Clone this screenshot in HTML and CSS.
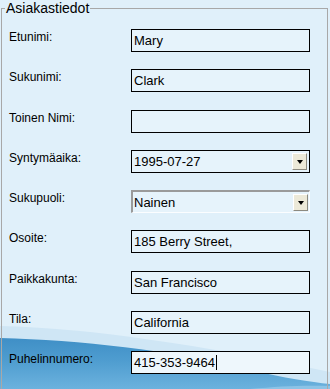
FILE: index.html
```html
<!DOCTYPE html>
<html lang="fi">
<head>
    <meta charset="UTF-8">
    <meta name="viewport" content="width=device-width, initial-scale=1.0">
    <title>Asiakastiedot</title>
    <link rel="stylesheet" href="styles.css">
</head>
<body>
    <!-- Wave decoration at the bottom of the window -->
    <svg class="wave" width="330" height="389" viewBox="0 0 330 389">
        <defs>
            <linearGradient id="band" x1="0" y1="0" x2="0" y2="1">
                <stop offset="0" stop-color="#3f8fc6"/>
                <stop offset="0.45" stop-color="#4f9dd0"/>
                <stop offset="1" stop-color="#6cb2de"/>
            </linearGradient>
        </defs>
        <path d="M0 326 C 90 328, 200 345, 330 372 L330 389 L0 389 Z" fill="#cfe6f5"/>
        <path d="M0 338 C 80 340, 170 350, 250 370 C 285 378, 310 382, 330 384 L330 389 L0 389 Z" fill="url(#band)"/>
        <path d="M250 389 C 280 386, 305 385, 330 386 L330 389 Z" fill="#8cc3e6"/>
    </svg>

    <fieldset class="customer">
        <legend>Asiakastiedot</legend>

        <div class="row">
            <label>Etunimi:</label>
            <div class="field">Mary</div>
        </div>
        <div class="row">
            <label>Sukunimi:</label>
            <div class="field">Clark</div>
        </div>
        <div class="row">
            <label>Toinen Nimi:</label>
            <div class="field"></div>
        </div>
        <div class="row">
            <label>Syntymäaika:</label>
            <div class="field combo">
                <span class="combo-text">1995-07-27</span>
                <span class="drop-btn"><span class="arrow"></span></span>
            </div>
        </div>
        <div class="row">
            <label>Sukupuoli:</label>
            <div class="field combo sunken">
                <span class="combo-text">Nainen</span>
                <span class="drop-btn"><span class="arrow"></span></span>
            </div>
        </div>
        <div class="row">
            <label>Osoite:</label>
            <div class="field">185 Berry Street,</div>
        </div>
        <div class="row">
            <label>Paikkakunta:</label>
            <div class="field">San Francisco</div>
        </div>
        <div class="row">
            <label>Tila:</label>
            <div class="field">California</div>
        </div>
        <div class="row">
            <label>Puhelinnumero:</label>
            <div class="field active">415-353-9464<span class="caret"></span></div>
        </div>
    </fieldset>
</body>
</html>
```

FILE: styles.css
```css
* {
    margin: 0;
    padding: 0;
    box-sizing: border-box;
}

body {
    position: relative;
    width: 330px;
    height: 389px;
    overflow: hidden;
    background: #e0f0fa;
    font-family: 'Liberation Sans', Arial, sans-serif;
    font-size: 12px;
    color: #000;
}

.wave {
    position: absolute;
    left: 0;
    top: 0;
}

.customer {
    position: relative;
    margin: 0 2px 0 1px;
    padding: 12px 0 0 7px;
    border: 1px solid #a8a8a8;
    min-height: 400px;
}

.customer legend {
    margin-left: -4px;
    padding: 0 1px;
    font-size: 14px;
    line-height: 17px;
}

.row {
    display: flex;
    align-items: flex-start;
    height: 40.3px;
}

.row label {
    width: 122px;
    line-height: 16px;
}

.field {
    width: 179px;
    height: 23px;
    padding: 0 2px;
    border: 1px solid #000;
    background: #e6f3fb;
    font-size: 13px;
    line-height: 21px;
    white-space: nowrap;
}

.active {
    background: #eef7fc;
}

.caret {
    display: inline-block;
    width: 1px;
    height: 15px;
    margin-left: 1px;
    vertical-align: -3px;
    background: #000;
}

.combo {
    display: flex;
    align-items: center;
    justify-content: space-between;
    padding-right: 2px;
}

.sunken {
    border-color: #9a9a9a #fbfdff #fbfdff #9a9a9a;
    border-width: 2px 1px 1px 2px;
    padding-left: 1px;
    padding-right: 1px;
}

.drop-btn {
    display: flex;
    align-items: center;
    justify-content: center;
    width: 15px;
    height: 17px;
    background: #ece9d8;
    border: 1px solid;
    border-color: #fff #8c8a80 #8c8a80 #fff;
}

.arrow {
    width: 0;
    height: 0;
    border-left: 3px solid transparent;
    border-right: 3px solid transparent;
    border-top: 4px solid #000;
    margin-top: 1px;
}
```
